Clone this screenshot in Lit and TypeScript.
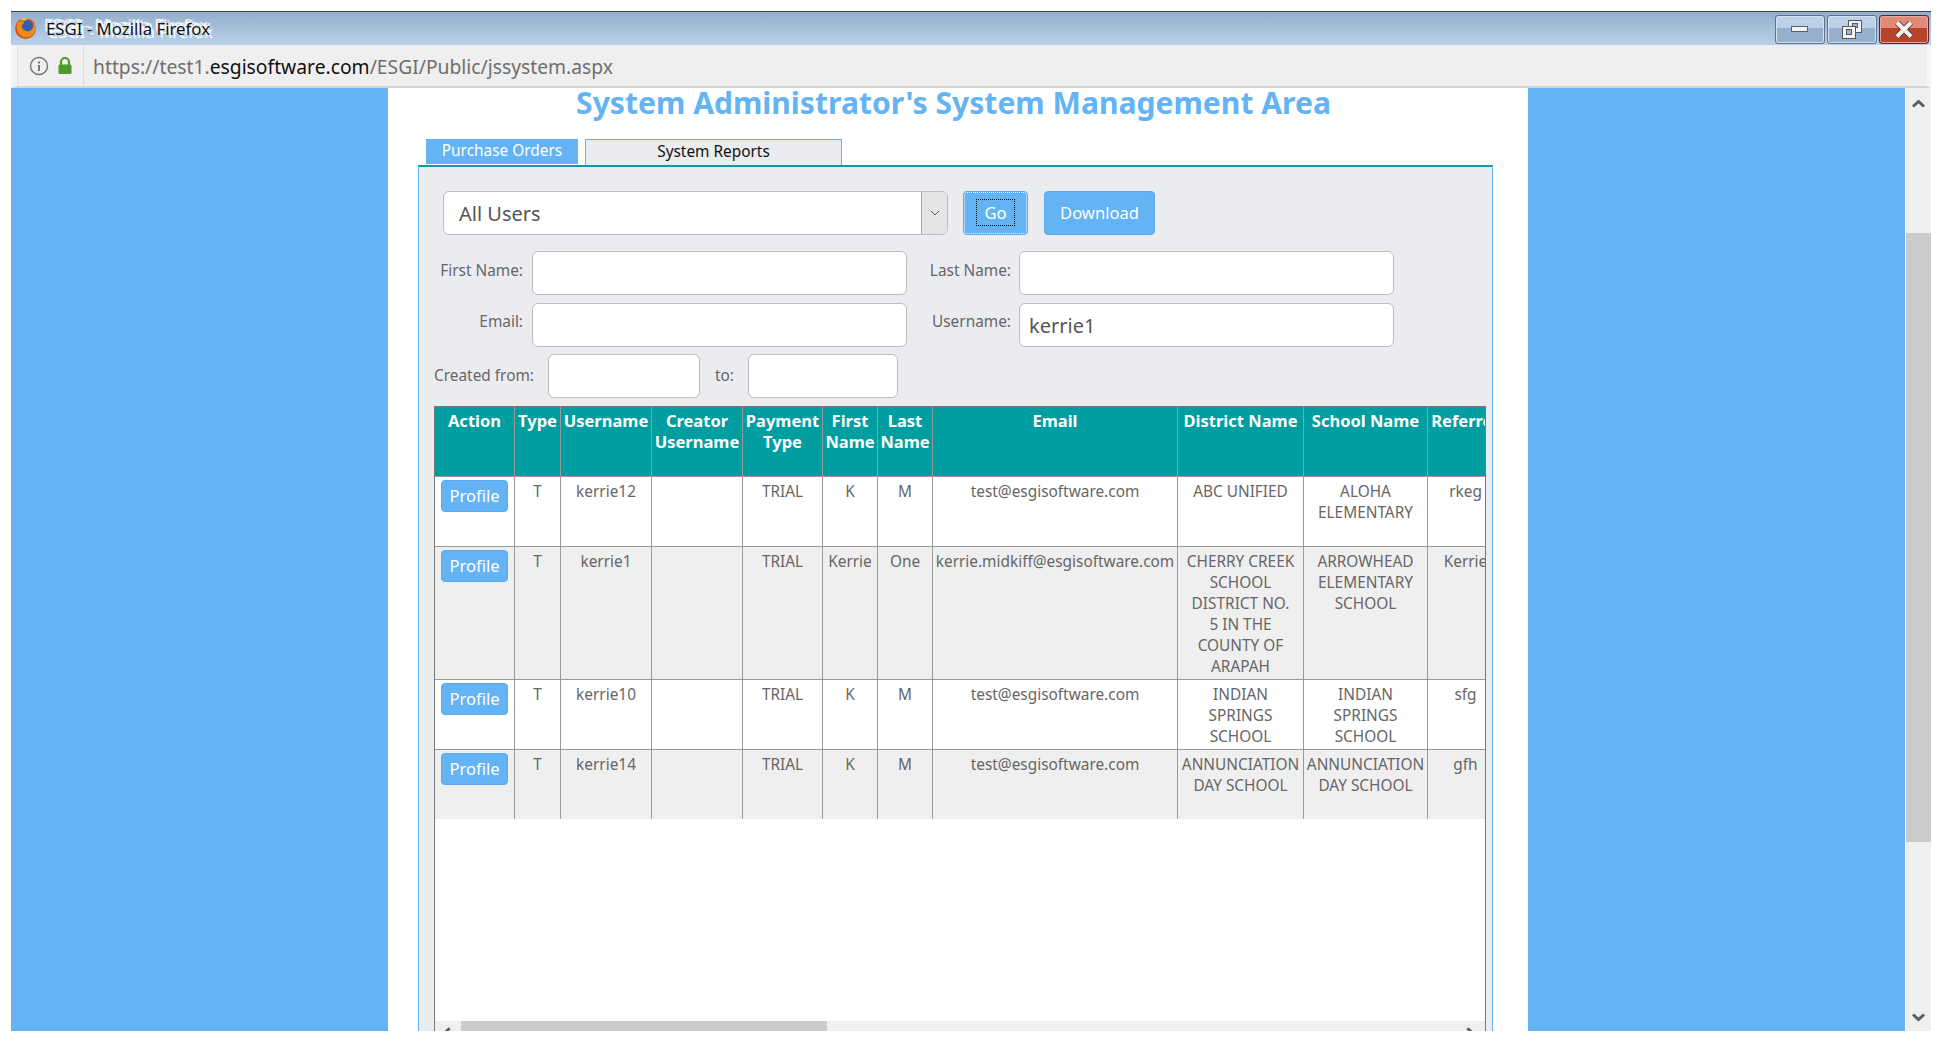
import { LitElement, html, css, svg } from 'lit';
import { customElement } from 'lit/decorators.js';

const COLUMNS = [
  { label: 'Action', width: 80 },
  { label: 'Type', width: 46 },
  { label: 'Username', width: 91 },
  { label: 'Creator Username', width: 91 },
  { label: 'Payment Type', width: 80 },
  { label: 'First Name', width: 55 },
  { label: 'Last Name', width: 55 },
  { label: 'Email', width: 245 },
  { label: 'District Name', width: 126 },
  { label: 'School Name', width: 124 },
  { label: 'Referrer', width: 76 },
];

const ROWS = [
  ['T', 'kerrie12', '', 'TRIAL', 'K', 'M', 'test@esgisoftware.com', 'ABC UNIFIED', 'ALOHA ELEMENTARY', 'rkeg'],
  ['T', 'kerrie1', '', 'TRIAL', 'Kerrie', 'One', 'kerrie.midkiff@esgisoftware.com', 'CHERRY CREEK SCHOOL DISTRICT NO. 5\u00a0IN\u00a0THE COUNTY\u00a0OF ARAPAH', 'ARROWHEAD ELEMENTARY SCHOOL', 'Kerrie'],
  ['T', 'kerrie10', '', 'TRIAL', 'K', 'M', 'test@esgisoftware.com', 'INDIAN SPRINGS SCHOOL', 'INDIAN SPRINGS SCHOOL', 'sfg'],
  ['T', 'kerrie14', '', 'TRIAL', 'K', 'M', 'test@esgisoftware.com', 'ANNUNCIATION DAY SCHOOL', 'ANNUNCIATION DAY SCHOOL', 'gfh'],
];

const firefoxIcon = svg`
  <svg width="23" height="23" viewBox="0 0 23 23">
    <circle cx="11.5" cy="11.5" r="10.5" fill="#d9531e" />
    <circle cx="12.5" cy="9.5" r="6.5" fill="#2f5fa8" />
    <path d="M3 6c-1 6 1 12 7 14 6 1.500 10-2 11.500-7 .5-3 0-6-2-8.500 1 4-.5 8-4 9.500-3.500 1-7-1-7.500-4-.5-2 1-3.500 2.500-4L8 3.500C6 4 4.500 5 3 6z" fill="#f08a1d" />
    <path d="M6 2.500c3-2 7-2 10 0-2-.5-4 0-5 1.500-2-.5-3.500-1-5-1.500z" fill="#f6b73c" />
  </svg>`;

const chevron = (points: string) => svg`
  <svg width="13" height="9" viewBox="0 0 13 9">
    <polyline points=${points} fill="none" stroke="#5c5c5c" stroke-width="3" />
  </svg>`;

@customElement('app-root')
export class AppRoot extends LitElement {
  static styles = css`
    :host {
      display: block;
      width: 1942px;
      height: 1042px;
      box-sizing: border-box;
      padding: 11px 11px 11px;
      background: #fff;
      overflow: hidden;
      font-family: 'Noto Sans', sans-serif;
    }

    .titlebar {
      height: 34px;
      box-sizing: border-box;
      border-top: 1px solid #3c4654;
      background: linear-gradient(#93aecb, #b9d1eb);
      display: flex;
      align-items: center;
      padding: 0 2px 0 3px;
    }
    .title {
      margin-left: 9px;
      font-size: 16.8px;
      color: #111;
      text-shadow: 0 0 3px #fff, 1px -3px 1px #fff, -2px -4px 1px #fff, 3px 3px 1px #fff;
      flex: 1;
    }
    .winbtn {
      width: 50px;
      height: 29px;
      box-sizing: border-box;
      margin-left: 2px;
      margin-top: 2px;
      border: 1px solid #5f7390;
      border-radius: 3px;
      box-shadow: inset 0 0 0 1px #d5e2f0;
      background: linear-gradient(#bcd0e8 0 45%, #97b0cd 45%);
      display: flex;
      align-items: center;
      justify-content: center;
    }
    .winbtn.close {
      border-color: #5a2233;
      box-shadow: inset 0 0 0 1px #e9a797;
      background: linear-gradient(#e08a79 0 45%, #b7432a 45%);
    }

    .addressbar {
      height: 43px;
      box-sizing: border-box;
      background: #efefef;
      border-bottom: 2px solid #d4d4d4;
      border-left: 6px solid #f4f4f4;
      border-right: 4px solid #f6f6f6;
      display: flex;
      align-items: center;
      font-size: 19.3px;
      color: #6e6e6e;
    }
    .addr-icons {
      display: flex;
      align-items: center;
      gap: 8px;
      height: 100%;
      width: 67px;
      box-sizing: border-box;
      padding-left: 11px;
      border-right: 1px solid #dcdcdc;
      border-left: 1px solid #e0e0e0;
    }
    .url {
      margin-left: 9px;
      padding-top: 2px;
    }
    .url b {
      font-weight: 400;
      color: #111;
    }

    .page {
      height: 943px;
      display: flex;
      overflow: hidden;
    }
    .side {
      width: 377px;
      background: #63b3f5;
      flex: none;
    }
    .main {
      width: 1140px;
      flex: none;
      background: #fff;
      box-sizing: border-box;
      padding-left: 30px;
      padding-right: 35px;
    }
    .vscroll {
      width: 25px;
      margin-left: 1px;
      flex: none;
      background: #efefef;
      display: flex;
      flex-direction: column;
      align-items: center;
    }
    .vscroll .up {
      height: 31px;
      display: flex;
      align-items: center;
    }
    .vscroll .thumb {
      margin-top: 114px;
      width: 100%;
      height: 609px;
      background: #cbcbcb;
    }
    .vscroll .down {
      margin-top: auto;
      height: 26px;
    }

    h1 {
      margin: 0;
      height: 51px;
      padding-right: 4px;
      text-align: center;
      color: #63b3f5;
      font-size: 30.1px;
      line-height: 30px;
      font-weight: 700;
    }

    .tabs {
      display: flex;
      padding-left: 8px;
      gap: 7px;
      align-items: flex-start;
      font-size: 15.4px;
      line-height: 24px;
    }
    .tab {
      height: 25px;
      box-sizing: border-box;
      text-align: center;
    }
    .tab.active {
      width: 152px;
      background: #63b3f5;
      color: #fff;
    }
    .tab.other {
      width: 257px;
      height: 26px;
      background: #eaecf0;
      color: #111;
      border: 1px solid #63b3f5;
      border-bottom: none;
    }

    .panel {
      box-sizing: border-box;
      height: 866px;
      background: #ebecf0;
      border-top: 2px solid #0f9aa5;
      border-left: 1px solid #63b3f5;
      border-right: 1px solid #63b3f5;
      color: #666;
      font-size: 15.4px;
    }

    .actions {
      display: flex;
      align-items: stretch;
      height: 44px;
      margin: 24px 0 16px 24px;
    }
    .select {
      width: 505px;
      box-sizing: border-box;
      background: #fff;
      border: 1px solid #bdbdbd;
      border-radius: 6px;
      display: flex;
      align-items: center;
      justify-content: space-between;
      padding-left: 15px;
      font-size: 20px;
      color: #555;
      overflow: hidden;
    }
    .select .arrow {
      width: 25px;
      height: 100%;
      background: #e4e4e4;
      border-left: 1px solid #a9a9a9;
      display: flex;
      align-items: center;
      justify-content: center;
    }
    .btn {
      box-sizing: border-box;
      background: #63b3f5;
      color: #fff;
      border: 1px solid #5aa9ea;
      border-radius: 4px;
      font: inherit;
      font-size: 16.6px;
      padding: 0 0 1px;
      display: flex;
      align-items: center;
      justify-content: center;
    }
    .go {
      width: 65px;
      margin-left: 15px;
      outline: 1px dotted #fff;
      outline-offset: -2px;
    }
    .go span {
      width: 39px;
      height: 27px;
      box-sizing: border-box;
      border: 1px dotted #000;
      display: flex;
      align-items: center;
      justify-content: center;
    }
    .download {
      width: 111px;
      margin-left: 16px;
    }

    .fields {
      display: grid;
      grid-template-columns: 113px 375px 112px 375px;
      grid-auto-rows: 44px;
      row-gap: 8px;
    }
    .fields label {
      text-align: right;
      padding: 7px 9px 0 0;
      line-height: 26px;
    }
    .fields label.second {
      padding-right: 8px;
    }
    .fields label.low {
      padding-top: 6px;
    }
    .input {
      box-sizing: border-box;
      background: #fff;
      border: 1px solid #bdbdbd;
      border-radius: 6px;
      padding: 0 9px;
      font-size: 20px;
      line-height: 42px;
      color: #555;
    }
    .input.typed {
      line-height: 44px;
    }

    .dates {
      display: flex;
      align-items: center;
      height: 44px;
      margin: 7px 0 8px 15px;
      line-height: 20px;
    }
    .dates .input {
      height: 44px;
    }
    .dates .label {
      width: 100px;
      white-space: nowrap;
    }
    .dates .from {
      width: 152px;
      margin-left: 14px;
    }
    .dates .till {
      width: 150px;
      margin-left: 12px;
    }
    .dates .to {
      width: 21px;
      margin-left: 15px;
    }

    .grid-box {
      margin-left: 15px;
      width: 1052px;
      height: 640px;
      box-sizing: border-box;
      background: #fff;
      border-left: 1px solid #777;
      border-right: 1px solid #777;
      display: flex;
      flex-direction: column;
    }
    .grid-scroll {
      height: 615px;
      overflow: hidden;
    }
    table {
      table-layout: fixed;
      width: 1069px;
      border-collapse: separate;
      border-spacing: 0;
      line-height: 21px;
    }
    th,
    td {
      box-sizing: border-box;
      height: 70px;
      padding: 4px 2px 2px;
      vertical-align: top;
      text-align: center;
      border-right: 1px solid #999;
      border-bottom: 1px solid #999;
      font-size: 15.4px;
    }
    th {
      height: 71px;
      background: #009ea0;
      color: #fff;
      font-weight: 700;
      font-size: 16.5px;
      border-top: 1px solid #777;
      padding: 3px 0 2px;
    }
    td {
      color: #666;
    }
    tr.even td {
      background: #efefef;
    }
    tr:last-child td {
      height: 69px;
      border-bottom: none;
    }
    td.action {
      padding: 3px 0 0;
    }
    .profile {
      width: 67px;
      height: 32px;
      margin: 0 auto;
    }

    .hscroll {
      height: 25px;
      background: #efefef;
      display: flex;
      align-items: flex-start;
      overflow: hidden;
    }
    .hscroll .thumb {
      margin-left: 26px;
      width: 366px;
      height: 25px;
      background: #cbcbcb;
    }
    .hscroll .left,
    .hscroll .right {
      width: 9px;
      height: 9px;
      box-sizing: border-box;
      margin-top: 8px;
      border-top: 3px solid #5c5c5c;
    }
    .hscroll .left {
      margin-left: 9px;
      margin-right: -18px;
      border-left: 3px solid #5c5c5c;
      transform: rotate(-45deg);
    }
    .hscroll .right {
      margin-left: auto;
      margin-right: 12px;
      border-right: 3px solid #5c5c5c;
      transform: rotate(45deg);
    }
  `;

  render() {
    return html`
      <div class="titlebar">
        ${firefoxIcon}
        <span class="title">ESGI - Mozilla Firefox</span>
        <div class="winbtn">
          <svg width="18" height="7" viewBox="0 0 18 7">
            <rect x=".5" y=".5" width="16" height="5" fill="#f2f2f2" stroke="#5b5f66" />
          </svg>
        </div>
        <div class="winbtn">
          <svg width="22" height="20" viewBox="0 0 22 20">
            <rect x="7.500" y=".5" width="13" height="12" fill="#f2f2f2" stroke="#55595f" />
            <rect x="11.500" y="3.500" width="5" height="4" fill="#9db4cf" stroke="#55595f" />
            <rect x="1.500" y="6.500" width="13" height="12" fill="#f5f5f5" stroke="#55595f" />
            <rect x="5.500" y="9.500" width="5" height="5" fill="#9db4cf" stroke="#55595f" />
          </svg>
        </div>
        <div class="winbtn close">
          <svg width="20" height="17" viewBox="0 0 20 17">
            <path d="M3 1.500 17 15.500M17 1.500 3 15.500" fill="none" stroke="#5a3a36" stroke-width="6" />
            <path d="M3 1.500 17 15.500M17 1.500 3 15.500" fill="none" stroke="#f1f1f1" stroke-width="4" />
          </svg>
        </div>
      </div>
      <div class="addressbar">
        <div class="addr-icons">
          <svg width="20" height="20" viewBox="0 0 20 20">
            <circle cx="10" cy="10" r="8.500" fill="none" stroke="#777" stroke-width="1.500" />
            <rect x="9" y="9" width="2" height="6" fill="#777" />
            <rect x="9" y="5.500" width="2" height="2" fill="#777" />
          </svg>
          <svg width="16" height="20" viewBox="0 0 16 20">
            <path d="M4 9V6a4 4 0 0 1 8 0v3" fill="none" stroke="#4f9a2c" stroke-width="2.200" />
            <rect x="1.500" y="8.500" width="13" height="9.500" rx="1.500" fill="#4f9a2c" />
          </svg>
        </div>
        <span class="url">https://test1.<b>esgisoftware.com</b>/ESGI/Public/jssystem.aspx</span>
      </div>
      <div class="page">
        <div class="side"></div>
        <div class="main">
          <h1>System Administrator's System Management Area</h1>
          <div class="tabs">
            <div class="tab active">Purchase Orders</div>
            <div class="tab other">System Reports</div>
          </div>
          <div class="panel">
            <div class="actions">
              <div class="select">
                All Users
                <span class="arrow">
                  <svg width="10" height="6" viewBox="0 0 10 6">
                    <polyline points="1,1 5,5 9,1" fill="none" stroke="#555" />
                  </svg>
                </span>
              </div>
              <button class="btn go"><span>Go</span></button>
              <button class="btn download">Download</button>
            </div>
            <div class="fields">
              <label>First Name:</label>
              <div class="input"></div>
              <label class="second">Last Name:</label>
              <div class="input"></div>
              <label class="low">Email:</label>
              <div class="input"></div>
              <label class="second low">Username:</label>
              <div class="input typed">kerrie1</div>
            </div>
            <div class="dates">
              <span class="label">Created from:</span>
              <div class="input from"></div>
              <span class="to">to:</span>
              <div class="input till"></div>
            </div>
            <div class="grid-box">
              <div class="grid-scroll">
                <table>
                  <colgroup>
                    ${COLUMNS.map((c) => html`<col style="width:${c.width}px" />`)}
                  </colgroup>
                  <thead>
                    <tr>${COLUMNS.map((c) => html`<th>${c.label}</th>`)}</tr>
                  </thead>
                  <tbody>
                    ${ROWS.map(
                      (row, i) => html`
                        <tr class=${i % 2 ? 'even' : ''}>
                          <td class="action"><button class="btn profile">Profile</button></td>
                          ${row.map((cell) => html`<td>${cell}</td>`)}
                        </tr>
                      `
                    )}
                  </tbody>
                </table>
              </div>
              <div class="hscroll">
                <div class="left"></div>
                <div class="thumb"></div>
                <div class="right"></div>
              </div>
            </div>
          </div>
        </div>
        <div class="side"></div>
        <div class="vscroll">
          <div class="up">${chevron('1,7.500 6.500,2.500 12,7.500')}</div>
          <div class="thumb"></div>
          <div class="down">${chevron('1,1.500 6.500,6.500 12,1.500')}</div>
        </div>
      </div>
    `;
  }
}
